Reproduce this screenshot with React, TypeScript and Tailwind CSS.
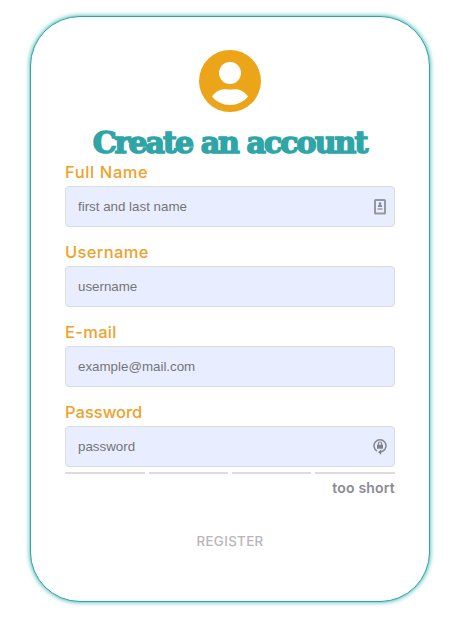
import React from 'react';

type FieldProps = {
  label: string;
  spacing: string;
  placeholder: string;
  icon?: React.ReactNode;
};

const ContactIcon = () => (
  <svg width="12" height="16" viewBox="0 0 12 16" fill="none">
    <rect x="1" y="1" width="10" height="13.5" rx="0.6" stroke="#97989e" strokeWidth="2" />
    <circle cx="6" cy="4.6" r="1.3" fill="#85868c" />
    <path d="M4 8V7Q4 5.8 6 5.8T8 7V8Z" fill="#85868c" />
    <path d="M3.5 10H8.5" stroke="#b0b2ba" strokeWidth="2" />
  </svg>
);

const LockIcon = () => (
  <svg width="14" height="17" viewBox="0 0 14 17" fill="none">
    <path d="M4 13A6 6 0 1 1 10 13L7 14" stroke="#88898f" strokeWidth="1.5" />
    <path d="M8.2 11.6V16.8L5 14.2Z" fill="#808187" />
    <path d="M5.3 7V5.7a1.7 1.7 0 0 1 3.4 0V7" stroke="#808187" strokeWidth="1.1" />
    <rect x="4" y="6.7" width="6" height="4" fill="#808187" />
  </svg>
);

const Field = ({ label, spacing, placeholder, icon }: FieldProps) => (
  <div className="h-20">
    <label className={`block h-[25px] whitespace-nowrap font-['Inter',sans-serif] text-[16.5px] leading-[22px] font-medium text-[#eda22c] ${spacing}`}>
      {label}
    </label>
    <div className="flex h-[41px] items-center justify-between rounded-[4px] border border-[#dcdcdc] bg-[#e8eeff] pr-[7px] pl-3">
      <input
        placeholder={placeholder}
        className="w-60 bg-transparent font-['Liberation_Sans',Arial,sans-serif] text-[13.333px] leading-4 outline-none placeholder:text-[#757575]"
      />
      {icon && <span className="flex w-[14px] justify-center">{icon}</span>}
    </div>
  </div>
);

export default function App() {
  return (
    <main className="flex h-[628px] w-[468px] bg-white pt-4 pl-[30px]">
      <form className="flex h-[586px] w-[400px] flex-col rounded-[50px] border border-[#2aa5a5] bg-white px-[34px] pt-[33px] shadow-[0_0_5px_#2fa9a9]">
        <svg className="shrink-0 self-center" width="62" height="62" viewBox="0 0 62 62">
          <circle cx="31" cy="31" r="31" fill="#eca519" />
          <circle cx="31" cy="23" r="11" fill="white" />
          <path d="M13 46.5C17 40.5 22 38.8 27 39.2Q31 40 35 39.2C40 38.8 45 40.5 49 46.5C44.5 52 38 55 31 55S17.5 52 13 46.5Z" fill="white" />
        </svg>
        <h1 className="mt-[13px] flex h-9 items-center justify-center whitespace-nowrap pr-px font-['DejaVu_Serif',serif] text-[30px] leading-9 font-bold tracking-[-1.95px] text-[#2fa5a7] [-webkit-text-stroke:1.6px_#2fa5a7]">
          Create an account
        </h1>
        <div>
          <Field label="Full Name" spacing="tracking-[0.6px]" placeholder="first and last name" icon={<ContactIcon />} />
          <Field label="Username" spacing="tracking-[0.35px]" placeholder="username" />
          <Field label="E-mail" spacing="tracking-[0.3px]" placeholder="example@mail.com" />
          <Field label="Password" spacing="tracking-[0px]" placeholder="password" icon={<LockIcon />} />
        </div>
        <div className="-mt-[9px] flex h-0.5 shrink-0 gap-1">
          <span className="w-20 bg-[#dcdcdc]" />
          <span className="w-[79px] bg-[#dcdcdc]" />
          <span className="w-[79px] bg-[#dcdcdc]" />
          <span className="w-20 bg-[#dcdcdc]" />
        </div>
        <p className="mt-1 self-end font-['Inter',sans-serif] text-[14px] leading-5 font-semibold tracking-[0.2px] text-[#8c8994]">too short</p>
        <button type="button" className="mt-[33px] self-center font-['Inter',sans-serif] text-[13.333px] leading-5 font-medium tracking-[0.35px] text-[#b8b6b9]">
          REGISTER
        </button>
      </form>
    </main>
  );
}
